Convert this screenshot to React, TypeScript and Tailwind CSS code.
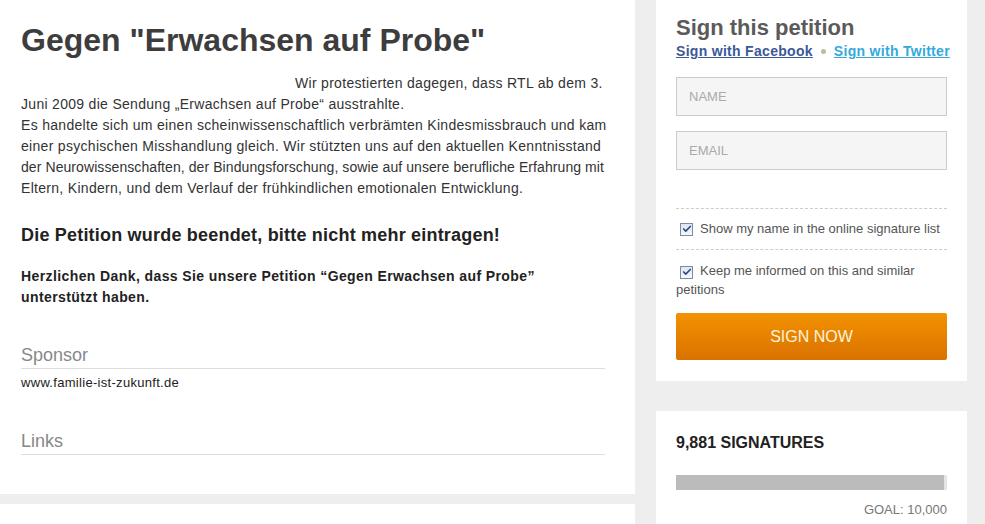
import { Check } from 'lucide-react'

const font = { fontFamily: '"Liberation Sans", Arial, sans-serif' }

function Checkbox() {
  return (
    <span className="inline-flex w-[13px] h-[13px] border border-[#7a8ba5] bg-gradient-to-b from-[#dfe6f0] to-[#f6f8fb] items-center justify-center mr-[7px] align-[-2px] shrink-0">
      <Check className="w-[10px] h-[10px] text-[#2a4a8a]" strokeWidth={4} />
    </span>
  )
}

export default function App() {
  return (
    <div style={font} className="w-[985px] h-[524px] bg-[#eeeeee] overflow-hidden flex gap-[21px]">
      {/* main column */}
      <div className="w-[635px] flex flex-col gap-[10px]">
        <div className="bg-white h-[494px] pl-[21px] pr-[30px] pt-[22px]">
          <h1 className="text-[32px] leading-[36px] font-bold text-[#3d3d3d]">Gegen "Erwachsen auf Probe"</h1>
          <p className="mt-[15px] whitespace-nowrap text-[14px] leading-[21px] tracking-[0.3px] text-[#333] indent-[274px]">
            Wir protestierten dagegen, dass RTL ab dem 3.<br />
            Juni 2009 die Sendung „Erwachsen auf Probe“ ausstrahlte.
          </p>
          <p className="whitespace-nowrap text-[14px] leading-[21px] tracking-[0.3px] text-[#333]">
            Es handelte sich um einen scheinwissenschaftlich verbrämten Kindesmissbrauch und kam<br />
            einer psychischen Misshandlung gleich. Wir stützten uns auf den aktuellen Kenntnisstand<br />
            <span className="tracking-[0.08px]">der Neurowissenschaften, der Bindungsforschung, sowie auf unsere berufliche Erfahrung mit</span><br />
            Eltern, Kindern, und dem Verlauf der frühkindlichen emotionalen Entwicklung.
          </p>
          <h2 className="mt-[24px] text-[18px] leading-[24px] tracking-[0.2px] font-bold text-[#222]">
            Die Petition wurde beendet, bitte nicht mehr eintragen!
          </h2>
          <p className="mt-[19px] whitespace-nowrap text-[14px] leading-[21px] tracking-[0.4px] font-bold text-[#222]">
            Herzlichen Dank, dass Sie unsere Petition “Gegen Erwachsen auf Probe”<br />
            unterstützt haben.
          </p>
          <h3 className="mt-[35px] text-[18px] leading-[24px] text-[#888] pb-[1px] border-b border-[#dddddd]">Sponsor</h3>
          <p className="mt-[5px] text-[13px] leading-[18px] tracking-[0.3px] text-[#222]">www.familie-ist-zukunft.de</p>
          <h3 className="mt-[37px] text-[18px] leading-[24px] text-[#888] pb-[1px] border-b border-[#dddddd]">Links</h3>
        </div>
        <div className="bg-white flex-1" />
      </div>

      {/* sidebar */}
      <div className="w-[311px] flex flex-col gap-[30px]">
        <div className="bg-white h-[381px] px-[20px] pt-[15px]">
          <h2 className="text-[22px] leading-[26px] font-bold text-[#5a5a5a]">Sign this petition</h2>
          <div className="flex items-center whitespace-nowrap text-[14px] leading-[20px] tracking-[0.3px] font-bold">
            <a className="text-[#3b5998] underline">Sign with Facebook</a>
            <span className="w-[5px] h-[5px] shrink-0 rounded-full bg-[#bbbbaa] mx-[8px]" />
            <a className="text-[#33aadd] underline">Sign with Twitter</a>
          </div>
          <input
            placeholder="NAME"
            className="mt-[16px] w-full h-[39px] bg-[#f5f5f5] border border-[#cccccc] px-[12px] text-[13px] placeholder:text-[#aaaaaa] outline-none"
          />
          <input
            placeholder="EMAIL"
            className="mt-[15px] w-full h-[39px] bg-[#f5f5f5] border border-[#cccccc] px-[12px] text-[13px] placeholder:text-[#aaaaaa] outline-none"
          />
          <div className="mt-[38px] border-t border-dashed border-[#cccccc]" />
          <div className="py-[11px] pl-[4px] text-[13px] leading-[18px] text-[#555] flex items-center">
            <Checkbox />
            Show my name in the online signature list
          </div>
          <div className="border-t border-dashed border-[#cccccc]" />
          <p className="mt-[11px] text-[13px] leading-[19px] text-[#555]">
            <span className="pl-[4px]" />
            <Checkbox />
            Keep me informed on this and similar petitions
          </p>
          <button className="mt-[14px] w-full h-[47px] rounded-[2px] bg-gradient-to-b from-[#f39200] to-[#d97200] text-[16px] text-[#fff3dc]">
            SIGN NOW
          </button>
        </div>
        <div className="bg-white flex-1 px-[20px] pt-[22px]">
          <h3 className="text-[16px] leading-[20px] font-bold text-[#222]">9,881 SIGNATURES</h3>
          <div className="mt-[22px] h-[15px] bg-[#e5e5e5]">
            <div className="h-full bg-[#bbbbbb]" style={{ width: '98.8%' }} />
          </div>
          <p className="mt-[12px] text-right text-[13px] leading-[16px] text-[#777]">GOAL: 10,000</p>
        </div>
      </div>
    </div>
  )
}
